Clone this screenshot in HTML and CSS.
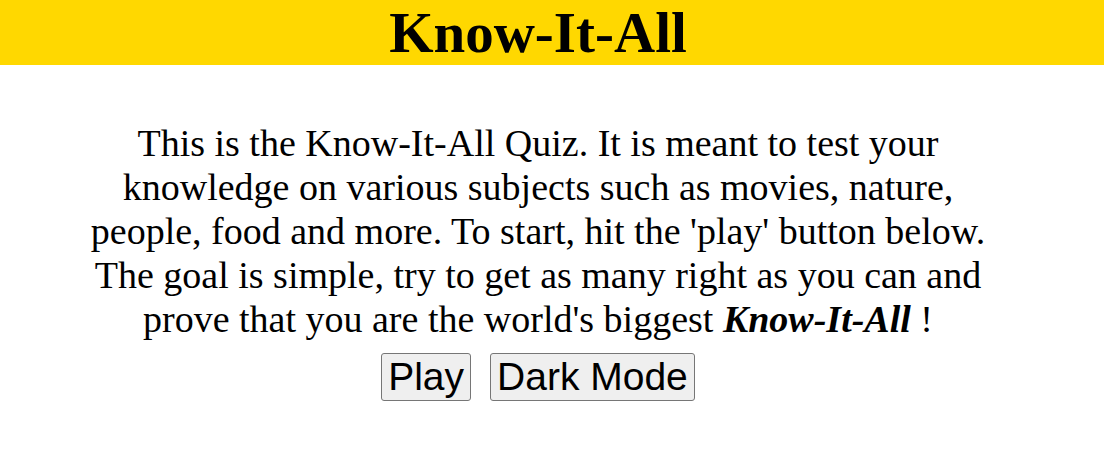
FILE: index.html
```html
<!DOCTYPE html>
<html lang="en">
<head>
<meta charset="utf-8">
<title>Know-It-All</title>
<link rel="stylesheet" href="styles.css">
</head>
<body>
<header class="site-header">
  <h1 class="site-title">Know-It-All</h1>
</header>
<main class="intro">
  <p class="intro-text">This is the Know-It-All Quiz. It is meant to test your knowledge on various subjects such as movies, nature, people, food and more. To start, hit the 'play' button below. The goal is simple, try to get as many right as you can and prove that you are the world's biggest <em class="brand">Know-It-All</em> !</p>
  <div class="actions">
    <button class="btn" type="button">Play</button>
    <button class="btn" type="button">Dark Mode</button>
  </div>
</main>
</body>
</html>
```

FILE: styles.css
```css
html, body {
  margin: 0;
  padding: 0;
  background: #ffffff;
  color: #000000;
  font-family: "Liberation Serif", "Times New Roman", serif;
}

.site-header {
  background: #ffd800;
  padding-right: 28px;
}

.site-title {
  margin: 0;
  text-align: center;
  font-size: 57px;
  line-height: 65px;
  font-weight: bold;
}

.intro {
  display: flex;
  flex-direction: column;
  align-items: center;
  padding: 56px 28px 0 0;
}

.intro-text {
  margin: 0;
  width: 920px;
  text-align: center;
  font-size: 38px;
  line-height: normal;
}

.brand {
  font-weight: bold;
  font-style: italic;
}

.actions {
  display: flex;
  justify-content: center;
  gap: 19px;
  margin-top: 12px;
}

.btn {
  font-family: "Liberation Sans", Arial, sans-serif;
  font-size: 39px;
  line-height: normal;
  padding: 1px 6px;
  margin: 0;
  background: #efefef;
  color: #000000;
  border: 1px solid #767676;
  border-radius: 3px;
}
```
